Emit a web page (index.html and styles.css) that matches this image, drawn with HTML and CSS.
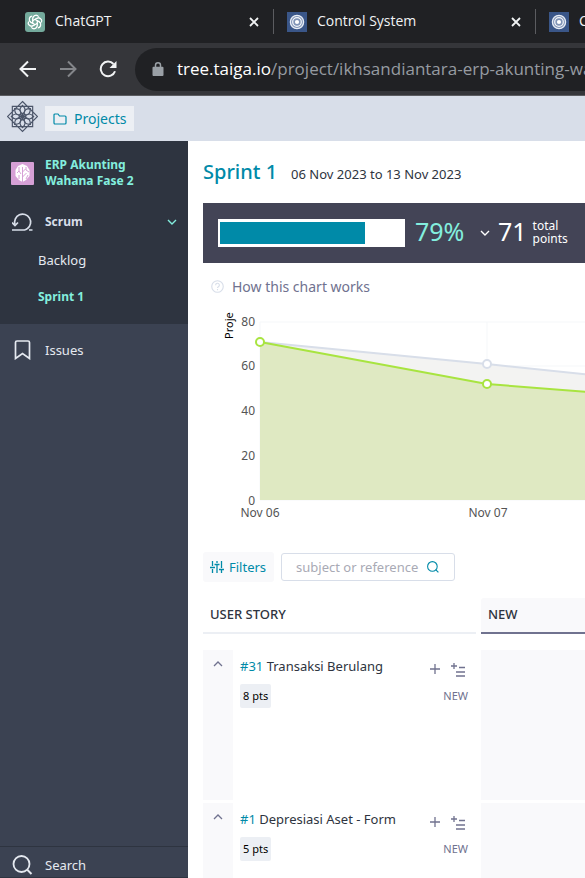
FILE: index.html
```html
<!DOCTYPE html>
<html lang="en">
<head>
<meta charset="utf-8">
<meta name="viewport" content="width=device-width, initial-scale=1">
<title>Sprint 1 - ERP Akunting Wahana Fase 2</title>
<link rel="stylesheet" href="styles.css">
</head>
<body>
<svg class="defs" aria-hidden="true">
  <symbol id="close" viewBox="0 0 10 10"><path d="M1 1l8 8M9 1l-8 8" fill="none" stroke="currentColor" stroke-width="1.8"/></symbol>
  <symbol id="rings" viewBox="0 0 20 20"><path fill="#3a5688" d="M0 0h20v20H0z"/><circle cx="10" cy="10" r="6.600" fill="#7f93b6" stroke="#e8edf5" stroke-width="1.300"/><circle cx="10" cy="10" r="4.300" fill="none" stroke="#f4f6fa" stroke-width="1.200"/><circle cx="10" cy="10" r="2.100" fill="#fff"/></symbol>
  <symbol id="up" viewBox="0 0 10 6"><path d="M1 5l4-4 4 4" fill="none" stroke="currentColor" stroke-width="1.300"/></symbol>
  <symbol id="down" viewBox="0 0 10 6"><path d="M1 1l4 4 4-4" fill="none" stroke="currentColor" stroke-width="1.400"/></symbol>
  <symbol id="plus" viewBox="0 0 10 10"><path d="M5 0v10M0 5h10" stroke="currentColor" stroke-width="1.300"/></symbol>
  <symbol id="bulk" viewBox="0 0 14 14"><path d="M3 0v6M0 3h6M8 4.500h6M5 9h9M5 13h9" fill="none" stroke="currentColor" stroke-width="1.300"/></symbol>
  <symbol id="search" viewBox="0 0 20 20"><circle cx="9" cy="9" r="8" fill="none" stroke="currentColor" stroke-width="1.800"/><path d="M14.500 14.500L19 19" stroke="currentColor" stroke-width="2"/></symbol>
</svg>

<header class="browser">
  <div class="tabs">
    <div class="tab">
      <svg class="favicon" viewBox="0 0 20 20"><rect width="20" height="20" rx="3" fill="#74aa9c"/><g fill="none" stroke="#fff" stroke-width="1"><g id="petals"><path id="petal" d="M7.700 11.300V6.500a3.300 3.300 0 0 1 6-1.900M7.700 8.700l4.200-2.400a3.300 3.300 0 0 1 4.700 3.800"/><use href="#petal" transform="rotate(60 10 10)"/><use href="#petal" transform="rotate(120 10 10)"/></g><use href="#petals" transform="rotate(180 10 10)"/></g></svg>
      <span class="tab-title">ChatGPT</span>
      <button class="tab-close" aria-label="Close tab"><svg><use href="#close"/></svg></button>
    </div>
    <div class="tab">
      <svg class="favicon"><use href="#rings"/></svg>
      <span class="tab-title">Control System</span>
      <button class="tab-close" aria-label="Close tab"><svg><use href="#close"/></svg></button>
    </div>
    <div class="tab">
      <svg class="favicon"><use href="#rings"/></svg>
      <span class="tab-title">Control System</span>
      <button class="tab-close" aria-label="Close tab"><svg><use href="#close"/></svg></button>
    </div>
  </div>
  <div class="toolbar">
    <button class="nav-button" aria-label="Back"><svg viewBox="0 0 18 18"><path d="M17 9H2M9 1.500L1.500 9 9 16.500"/></svg></button>
    <button class="nav-button disabled" aria-label="Forward" disabled><svg viewBox="0 0 18 18"><path d="M1 9h15M9 1.500L16.500 9 9 16.500"/></svg></button>
    <button class="nav-button" aria-label="Reload"><svg viewBox="0 0 18 18"><path d="M16 11.200a7.300 7.300 0 1 1-1.500-7.200"/><path class="solid" d="M17.500 1v7h-7z"/></svg></button>
    <div class="address">
      <svg class="lock" viewBox="0 0 12 14"><path d="M1.500 4.800h9a1 1 0 0 1 1 1V13a1 1 0 0 1-1 1h-9a1 1 0 0 1-1-1V5.800a1 1 0 0 1 1-1z" fill="#9aa0a6"/><path d="M3.500 6V3.300a2.500 2.500 0 0 1 5 0V6" fill="none" stroke="#9aa0a6" stroke-width="1.500"/></svg>
      <span class="url"><b>tree.taiga.io</b>/project/ikhsandiantara-erp-akunting-wahana-fase-2</span>
    </div>
  </div>
</header>

<nav class="topbar">
  <a class="logo" href="#" aria-label="Home"><svg viewBox="-16 -16 32 32"><g fill="none" stroke="#4c566a" stroke-width="1.200"><path d="M-10.500-10.500h21v21h-21zM0-15.500L15.500 0 0 15.500-15.500 0z"/><g id="star"><path id="leaf" d="M0-2C-3.500-6-3.500-8 0-11.500 3.500-8 3.500-6 0-2zM0 0v-4"/><use href="#leaf" transform="rotate(45)"/><use href="#leaf" transform="rotate(90)"/><use href="#leaf" transform="rotate(135)"/></g><use href="#star" transform="rotate(180)"/></g></svg></a>
  <a class="projects" href="#"><svg viewBox="0 0 14 12"><path d="M1 10V2a1 1 0 0 1 1-1h3l1.500 2H12a1 1 0 0 1 1 1v6a1 1 0 0 1-1 1H2a1 1 0 0 1-1-1z" fill="none" stroke="currentColor" stroke-width="1.200"/></svg>Projects</a>
</nav>

<div class="app">
  <aside class="sidebar">
    <div class="project-menu">
      <a class="project" href="#">
        <svg viewBox="0 0 23 23"><rect width="23" height="23" rx="1" fill="#d6a0d6"/><path d="M11.500 2L16 4l2.500 4v6L15 18l-3.500 2L8 18l-3.500-4V8L7 4z" fill="#fff"/><path d="M11.500 5v16M11.500 10l3-3M11.500 15l4-4M8 5v4l-2 2M8 9l2 3M8 17v-4M15 5v3l3 2M15 17l2-4" fill="none" stroke="#d6a0d6"/></svg>
        <span>ERP Akunting<br>Wahana Fase 2</span>
      </a>
      <a class="menu-item scrum" href="#">
        <svg viewBox="0 0 21 18"><path d="M3 11.500A8 8 0 1 1 15.500 15.500M0 17h12.500a7 7 0 0 0 3.500-2M17 17h3.500" fill="none" stroke="currentColor" stroke-width="1.700"/><path d="M0 9.500l3 3L6 9.500" fill="none" stroke="currentColor" stroke-width="1.700"/></svg>
        <span>Scrum</span>
        <svg class="arrow"><use href="#down"/></svg>
      </a>
      <a class="sub-item" href="#">Backlog</a>
      <a class="sub-item active" href="#">Sprint 1</a>
    </div>
    <a class="menu-item issues" href="#">
      <svg viewBox="0 0 21 20"><path d="M3.500 18.500V2.500A1.500 1.500 0 0 1 5 1h11a1.500 1.500 0 0 1 1.500 1.500v16l-7-5z" fill="none" stroke="currentColor" stroke-width="1.700"/></svg>
      <span>Issues</span>
    </a>
    <a class="menu-item search-link" href="#"><svg><use href="#search"/></svg><span>Search</span></a>
  </aside>

  <main class="main">
    <h1 class="title">Sprint 1 <span>06 Nov 2023 to 13 Nov 2023</span></h1>

    <section class="summary">
      <div class="progress" role="progressbar" aria-label="Sprint progress" aria-valuenow="79" aria-valuemin="0" aria-valuemax="100"><div class="progress-fill" style="width:79%"></div></div>
      <span class="percent">79%</span>
      <button class="expand" aria-label="Show points"><svg><use href="#down"/></svg></button>
      <span class="points">71</span>
      <span class="points-label">total<br>points</span>
    </section>

    <a class="chart-help" href="#"><svg viewBox="0 0 14 14"><circle cx="7" cy="7" r="6.200"/><path d="M5 5.600a2 2 0 1 1 3 1.600c-.8.500-1 .8-1 1.500M7 9.800v1.200"/></svg>How this chart works</a>

    <svg class="chart" role="img" aria-label="Burndown chart">
      <path class="grid" d="M57 10h910M57 54h910M57 99h910M57 143h910M57 188h910M57 10v178M284 10v178"/>
      <path class="ideal-area" d="M57 30L284 52 512 76V188H57z"/>
      <path class="real-area" d="M57 30L284 72 512 90V188H57z"/>
      <path class="ideal" d="M57 30L284 52 512 76"/>
      <path class="real" d="M57 30L284 72 512 90"/>
      <circle class="ideal dot" cx="284" cy="52" r="4"/>
      <circle class="real dot" cx="57" cy="30" r="4"/>
      <circle class="real dot" cx="284" cy="72" r="4"/>
      <g class="ticks-y"><text x="52" y="14">80</text><text x="52" y="58">60</text><text x="52" y="103">40</text><text x="52" y="148">20</text><text x="52" y="193">0</text></g>
      <g class="ticks-x"><text x="57" y="205">Nov 06</text><text x="285" y="205">Nov 07</text></g>
      <text class="axis" transform="translate(30 27) rotate(-90)">Project points</text>
    </svg>

    <div class="filters">
      <button class="filter-button"><svg viewBox="0 0 14 14"><path d="M2.500 1v5M0 7.500h5M2.500 9v4M7 1v2M4.500 4.500h5M7 5v8M11.500 1v7M9 9.500h5M11.500 10v3" fill="none" stroke="currentColor" stroke-width="1.300"/></svg>Filters</button>
      <label class="search-box"><input type="text" placeholder="subject or reference" aria-label="Search tasks"><svg><use href="#search"/></svg></label>
    </div>

    <section class="board">
      <h2 class="column-head story-head">USER STORY</h2>
      <h2 class="column-head new-head">NEW</h2>

      <article class="story">
        <button class="fold" aria-label="Fold row"><svg><use href="#up"/></svg></button>
        <div class="story-body">
          <div class="story-line"><a class="story-name" href="#"><span>#31</span> Transaksi Berulang</a><button class="add" aria-label="Add task"><svg><use href="#plus"/></svg></button><button class="bulk" aria-label="Add tasks in bulk"><svg><use href="#bulk"/></svg></button></div>
          <div class="story-line"><span class="pts">8 pts</span><span class="status">NEW</span></div>
        </div>
      </article>
      <div class="cell"></div>

      <article class="story">
        <button class="fold" aria-label="Fold row"><svg><use href="#up"/></svg></button>
        <div class="story-body">
          <div class="story-line"><a class="story-name" href="#"><span>#1</span> Depresiasi Aset - Form</a><button class="add" aria-label="Add task"><svg><use href="#plus"/></svg></button><button class="bulk" aria-label="Add tasks in bulk"><svg><use href="#bulk"/></svg></button></div>
          <div class="story-line"><span class="pts">5 pts</span><span class="status">NEW</span></div>
        </div>
      </article>
      <div class="cell"></div>
    </section>
  </main>
</div>
</body>
</html>
```
FILE: styles.css
```css
* { box-sizing: border-box; }
body {
  margin: 0;
  height: 100vh;
  display: flex;
  flex-direction: column;
  overflow: hidden;
  background: #fff;
  color: #2e3440;
  font: 13px/16px "Noto Sans", "Open Sans", sans-serif;
}
a { color: inherit; text-decoration: none; }
button { border: 0; padding: 0; background: none; color: inherit; font: inherit; display: flex; align-items: center; justify-content: center; }
svg { display: block; flex: none; }
.defs { position: absolute; width: 0; height: 0; }

.browser { flex: none; background: #35363a; border-bottom: 1px solid #5b5c60; font-family: "Open Sans", sans-serif; }
.tabs { display: flex; height: 43px; padding-left: 12px; background: #202124; overflow: hidden; }
.tab { flex: none; display: flex; align-items: center; width: 262px; height: 25px; margin-top: 9px; padding: 0 14px 0 13px; border-right: 1px solid #5b5c60; color: #f1f3f4; font-size: 14px; line-height: 20px; }
.favicon { width: 20px; height: 20px; margin-right: 10px; }
.tab-title { flex: 1; margin-top: -2px; }
.tab-close svg { width: 10px; height: 10px; }
.toolbar { display: flex; align-items: center; height: 52px; padding-left: 19px; overflow: hidden; }
.nav-button { width: 18px; height: 18px; margin-right: 22px; color: #f1f3f4; }
.nav-button svg { width: 18px; height: 18px; fill: none; stroke: currentColor; stroke-width: 2; }
.nav-button .solid { fill: currentColor; stroke: none; }
.nav-button.disabled { color: #84868a; }
.address { flex: 1; min-width: 0; display: flex; align-items: center; height: 43px; margin-left: -4px; padding-left: 17px; border-radius: 22px 0 0 22px; background: #202124; overflow: hidden; }
.lock { width: 12px; height: 14px; margin-right: 13px; }
.url { color: #969ba1; font-size: 17px; line-height: 24px; white-space: nowrap; }
.url b { color: #fff; font-weight: 400; }

.topbar { flex: none; display: flex; align-items: center; gap: 7px; height: 45px; padding-left: 7px; background: #d8dee9; }
.logo svg { width: 31px; height: 33px; margin-bottom: 4px; }
.projects { display: flex; align-items: center; gap: 7px; height: 25px; padding: 0 8px; background: #eceff4; color: #008aa8; font-size: 14px; }
.projects svg { width: 14px; height: 12px; }

.app { flex: 1; min-height: 0; display: flex; }
.sidebar { flex: none; width: 188px; display: flex; flex-direction: column; background: #3b4252; color: #e5e9f0; }
.project-menu { height: 183px; padding-top: 16px; background: #2e3440; }
.project { display: flex; align-items: center; gap: 11px; padding-left: 11px; color: #83eede; font-size: 12px; font-weight: 700; }
.project svg { width: 23px; height: 23px; }
.menu-item { display: flex; align-items: center; gap: 12px; padding: 0 11px 0 12px; }
.menu-item svg { width: 21px; height: 20px; }
.scrum { height: 36px; margin-top: 15px; color: #d8dee9; font-size: 12px; font-weight: 700; }
.menu-item .arrow { width: 10px; height: 6px; margin-left: auto; color: #83eede; }
.sub-item { display: block; padding-left: 38px; margin-top: 12px; height: 25px; }
.sub-item.active { color: #83eede; font-size: 12px; font-weight: 700; }
.issues { height: 52px; }
.search-link { height: 32px; margin-top: auto; padding-top: 6px; border-top: 1px solid #2e3440; border-bottom: 1px solid #2e3440; }

.main { flex: 1; min-width: 0; padding: 16px 0 0 15px; overflow: hidden; }
.title { display: flex; align-items: baseline; gap: 14px; height: 46px; margin: 0; color: #008aa8; font-size: 20px; line-height: 30px; font-weight: 500; white-space: nowrap; }
.title span { color: #2e3440; font-size: 13px; font-weight: 400; }
.summary { display: flex; align-items: center; height: 60px; padding-left: 15px; background: #434456; color: #fff; white-space: nowrap; }
.progress { flex: none; width: 187px; height: 28px; padding: 3px 2px; background: #fff; }
.progress-fill { height: 22px; background: #008aa8; }
.percent { width: 65px; padding-left: 10px; color: #83eede; font-size: 25px; line-height: 28px; }
.summary .percent, .points { margin-top: -4px; }
.expand svg { width: 10px; height: 6px; }
.expand { width: 10px; margin-left: 10px; }
.points { margin-left: 8px; font-size: 25px; line-height: 28px; }
.points-label { margin: -2px 0 0 6px; font-size: 12px; line-height: 13px; }
.chart-help { display: flex; align-items: center; gap: 8px; height: 49px; padding: 0 0 2px 8px; color: #70728f; font-size: 14px; }
.chart-help svg { width: 13px; height: 13px; fill: none; stroke: #d8dee9; stroke-width: 1.2; }

.chart { width: 100%; height: 216px; }
.grid { fill: none; stroke: #f5f7f9; }
.ideal-area { fill: #f3f3f2; }
.real-area { fill: #dfe9c2; }
.ideal, .real { fill: none; stroke: #d8dee9; stroke-width: 2; }
.real { stroke: #a8e440; }
.ideal.dot, .real.dot { fill: #fff; }
.ticks-x, .ticks-y { fill: #545454; font-size: 12px; text-anchor: middle; }
.ticks-y { text-anchor: end; }
.axis { fill: #000; font-size: 11px; }

.filters { display: flex; align-items: center; gap: 7px; height: 30px; margin-top: 24px; }
.filter-button { gap: 5px; height: 30px; padding: 0 8px 0 7px; border-radius: 3px; background: #f9f9fb; color: #008aa8; }
.filter-button svg { width: 14px; height: 14px; }
.search-box { display: flex; align-items: center; width: 174px; height: 28px; padding: 0 15px 0 14px; border: 1px solid #d8dee9; border-radius: 3px; }
.search-box input { flex: 1; min-width: 0; padding: 0; border: 0; outline: 0; background: none; font: inherit; }
.search-box input::placeholder { color: #a9aab5; }
.search-box svg { width: 12px; height: 12px; color: #008aa8; }

.board { display: grid; grid-template-columns: 273px minmax(104px, 1fr); column-gap: 5px; row-gap: 3px; margin-top: 16px; }
.column-head { height: 36px; margin: 0 0 13px; padding: 8px 7px; font-size: 13px; line-height: 16px; font-weight: 500; }
.story-head { border-bottom: 2px solid #eceff4; }
.new-head { border-bottom: 2px solid #70728f; border-radius: 3px 0 0 0; background: #f9f9fb; }
.story { display: flex; height: 150px; }
.fold { flex: none; width: 30px; align-items: flex-start; padding-top: 11px; background: #f9f9fb; color: #70728f; }
.fold svg { width: 10px; height: 6px; }
.story-body { flex: 1; padding: 8px 8px 0 7px; }
.story-line { display: flex; align-items: flex-start; height: 24px; margin-bottom: 2px; color: #70728f; }
.story-name { flex: 1; color: #2e3440; white-space: nowrap; }
.story-name span { color: #008aa8; }
.add { margin-top: 6px; }
.add svg { width: 10px; height: 10px; }
.bulk svg { width: 14px; height: 14px; }
.bulk { margin: 5px 3px 0 11px; }
.pts { padding: 0 3px; border-radius: 2px; background: #eceff4; color: #000; font-size: 11px; line-height: 24px; }
.status { margin-left: auto; font-size: 11px; line-height: 24px; }
.cell { background: #f9f9fb; }
```
